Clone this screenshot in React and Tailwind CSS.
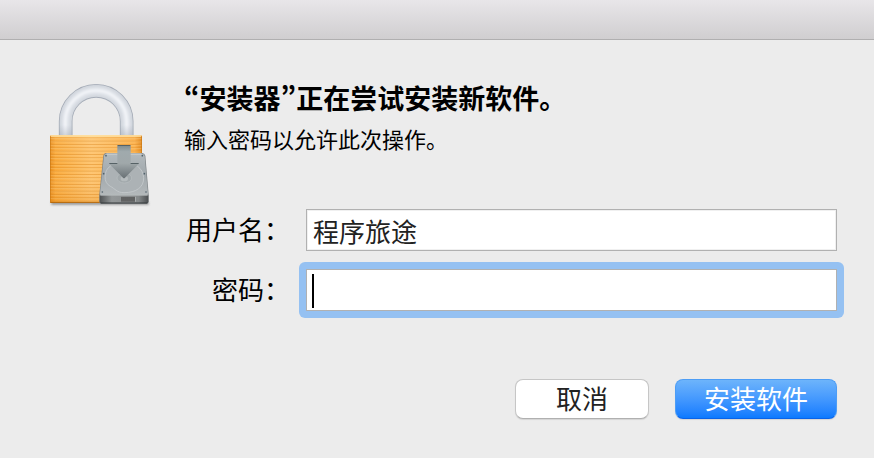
import React, { useState } from "react";

function LockIcon() {
  return (
    <svg
      viewBox="0 0 360 420"
      className="h-[140px] w-[120px] shrink-0"
      role="img"
      aria-label="安装器"
    >
      <defs>
        <linearGradient id="body" x1="0" x2="1" y1="0" y2="0">
          <stop offset="0" stopColor="#e88d1c" />
          <stop offset="0.06" stopColor="#fbab3c" />
          <stop offset="0.45" stopColor="#ffc570" />
          <stop offset="0.92" stopColor="#fdb048" />
          <stop offset="1" stopColor="#e18415" />
        </linearGradient>
        <linearGradient id="bodyShade" x1="0" x2="0" y1="0" y2="1">
          <stop offset="0" stopColor="#fff" stopOpacity="0.08" />
          <stop offset="0.5" stopColor="#fff" stopOpacity="0" />
          <stop offset="1" stopColor="#d87400" stopOpacity="0.2" />
        </linearGradient>
        <pattern id="lines" width="10" height="10" y="187" patternUnits="userSpaceOnUse">
          <rect width="10" height="3" fill="#d98317" opacity="0.5" />
          <rect y="3" width="10" height="2" fill="#ffd28a" opacity="0.45" />
        </pattern>
        <linearGradient id="legShade" x1="0" x2="0" y1="0" y2="1">
          <stop offset="0.6" stopColor="#8e97a5" stopOpacity="0" />
          <stop offset="1" stopColor="#8e97a5" stopOpacity="0.35" />
        </linearGradient>
        <linearGradient id="disk" x1="0" x2="0" y1="0" y2="1">
          <stop offset="0" stopColor="#b3babd" />
          <stop offset="0.5" stopColor="#a1a8ac" />
          <stop offset="1" stopColor="#b4b9bb" />
        </linearGradient>
        <linearGradient id="front" x1="0" x2="1" y1="0" y2="0">
          <stop offset="0" stopColor="#4f5253" />
          <stop offset="0.25" stopColor="#939798" />
          <stop offset="0.8" stopColor="#85898a" />
          <stop offset="1" stopColor="#4b4e50" />
        </linearGradient>
        <linearGradient id="arrow" x1="0" x2="0" y1="0" y2="1">
          <stop offset="0" stopColor="#7d898c" />
          <stop offset="0.2" stopColor="#a0aaad" />
          <stop offset="0.55" stopColor="#a0a8aa" />
          <stop offset="1" stopColor="#697175" />
        </linearGradient>
        <filter id="soft" x="-10%" y="-100%" width="120%" height="300%">
          <feGaussianBlur stdDeviation="3" />
        </filter>
        <filter id="gloss">
          <feGaussianBlur stdDeviation="3" />
        </filter>
      </defs>

      <path d="M34 380H304L326 382V389H34Z" fill="#555" opacity="0.6" filter="url(#soft)" />

      {/* shackle */}
      <g fill="none">
        <path d="M77 186V139A91.500 91.500 0 0 1 260 139V186" stroke="#a4abb6" strokeWidth="41" />
        <path d="M77 186V139A91.500 91.500 0 0 1 260 139V186" stroke="#d0d5dc" strokeWidth="36" />
        <path d="M77 186V139A91.500 91.500 0 0 1 260 139V186" stroke="#dde1e7" strokeWidth="26" filter="url(#gloss)" />
        <path d="M76 186V139A92 92 0 0 1 260 139V186" stroke="#f2f4f8" strokeWidth="10" filter="url(#gloss)" />
      </g>
      <path d="M57 100H97V183H57ZM240 100H280V183H240Z" fill="url(#legShade)" />

      {/* body */}
      <rect x="30" y="181" width="276" height="203" rx="4" fill="url(#body)" />
      <rect x="30" y="187" width="276" height="192" fill="url(#lines)" />
      <rect x="30" y="181" width="276" height="203" rx="4" fill="url(#bodyShade)" />
      <path d="M32 183H304" stroke="#ffe3a5" strokeWidth="4" />
      <path d="M31 382H304" stroke="#ad630c" strokeWidth="3" />
      <path d="M31.500 184V382M304.500 184V382" stroke="#c87915" strokeWidth="2" />

      {/* hard disk */}
      <path d="M198 234H306Q314 234 316 242L326 358V380Q326 386 319 386H185Q178 386 178 379V358L190 242Q191 234 198 234Z" fill="#7d8386" />
      <path d="M199 236H305Q312 236 314 243L324 356Q324 361 318 361H185Q180 361 180 356L192 243Q193 236 199 236Z" fill="url(#disk)" />
      <path d="M199 237H305" stroke="#d1d5d6" strokeWidth="3" />
      <path d="M195 305C195 276 220 262 252 262S309 278 311 308C312 337 288 353 252 353C231 353 225 341 211 334C200 328 195 318 195 305Z" fill="#acb2b5" stroke="#c5cacc" strokeWidth="2.500" />
      <ellipse cx="253" cy="309" rx="22" ry="15" fill="#a2a9ac" stroke="#b8bec0" strokeWidth="2" />
      <ellipse cx="253" cy="311" rx="11" ry="8" fill="#b5bbbd" />
      <g fill="#50616b">
        <circle cx="198" cy="242" r="2.500" />
        <circle cx="307" cy="242" r="2.500" />
        <circle cx="191" cy="296" r="2.500" />
        <circle cx="313" cy="296" r="2.500" />
        <circle cx="187" cy="351" r="2.500" />
        <circle cx="318" cy="351" r="2.500" />
      </g>
      <path d="M179 361H325V380Q325 385 319 385H185Q179 385 179 380Z" fill="url(#front)" />
      <path d="M181 361H323" stroke="#bdc1c2" strokeWidth="2" />
      <rect x="243" y="365" width="44" height="15" fill="#b9bcbc" />
      <path d="M246 365V380M252 365V380M258 365V380M264 365V380M270 365V380M276 365V380M282 365V380" stroke="#222" strokeWidth="3.500" />
      <path d="M182 384H322" stroke="#35383a" strokeWidth="3" />

      {/* arrow */}
      <path d="M232 212Q232 210 234 210H270Q272 210 272 212V264H295Q298 265 295 268L255 308Q252 311 249 308L209 268Q206 265 209 264H232Z" fill="url(#arrow)" />
      <path d="M233 211.500H271M208 265.500H232M272 265.500H296" stroke="#566266" strokeWidth="3" />
    </svg>
  );
}

function App() {
  const [username, setUsername] = useState("程序旅途");
  const [password, setPassword] = useState("");

  return (
    <div
      lang="zh-CN"
      className="min-h-screen bg-[#ececec] font-['Noto_Sans_CJK_SC',sans-serif] text-black"
    >
      <header className="h-10 border-b border-[#b0afb0] bg-linear-to-b from-[#e8e6e9] to-[#d0ced0]" />
      <main className="flex gap-6 pt-[35px] pr-[37px] pl-10">
        <LockIcon />
        <div className="min-w-0 flex-1 pt-[5px]">
          <h1 className="text-[27px] leading-9 font-bold [font-feature-settings:'pwid']">
            “安装器”正在尝试安装新软件。
          </h1>
          <p className="mt-[6px] text-[22px] leading-8">输入密码以允许此次操作。</p>

          <form className="mt-[55px]" onSubmit={(e) => e.preventDefault()}>
            <div className="grid grid-cols-[106px_1fr] items-center gap-x-4 gap-y-[18px] text-[26px] leading-9">
              <label htmlFor="username" className="flex justify-end pb-[2px] whitespace-nowrap">
                用户名：
              </label>
              <input
                id="username"
                type="text"
                value={username}
                onChange={(e) => setUsername(e.target.value)}
                className="h-[42px] w-full min-w-0 border border-[#b1b1b1] bg-white px-[6px] text-[#222] shadow-[inset_0_0_0_1px_#f0f0f0] outline-none"
              />
              <label htmlFor="password" className="flex justify-end pb-[2px] whitespace-nowrap">
                密码：
              </label>
              <div className="relative -m-[7px] rounded-md bg-[#95c1f2] p-[7px]">
                <input
                  id="password"
                  type="password"
                  value={password}
                  onChange={(e) => setPassword(e.target.value)}
                  className="block h-[42px] w-full min-w-0 border border-[#b1b1b1] bg-white px-[6px] outline-none"
                />
                {password === "" && (
                  <span className="pointer-events-none absolute top-3 left-[13px] h-[34px] w-[2px] bg-black" />
                )}
              </div>
            </div>

            <div className="mt-[68px] flex justify-end gap-[26px] text-[26px] leading-9">
              <button
                type="button"
                className="h-10 w-[134px] rounded-lg border border-[#c6c6c6] border-b-[#b0b0b0] bg-white pb-[2px] text-[#222] shadow-[0_1px_1px_#0000001a]"
              >
                取消
              </button>
              <button
                type="submit"
                className="h-10 w-[162px] rounded-lg border border-[#4d9df5] border-b-[#0a63e8] bg-linear-to-b from-[#6db4fb] to-[#0a7aff] pb-[2px] text-white shadow-[0_1px_1px_#0000001a]"
              >
                安装软件
              </button>
            </div>
          </form>
        </div>
      </main>
    </div>
  );
}

export default App;
